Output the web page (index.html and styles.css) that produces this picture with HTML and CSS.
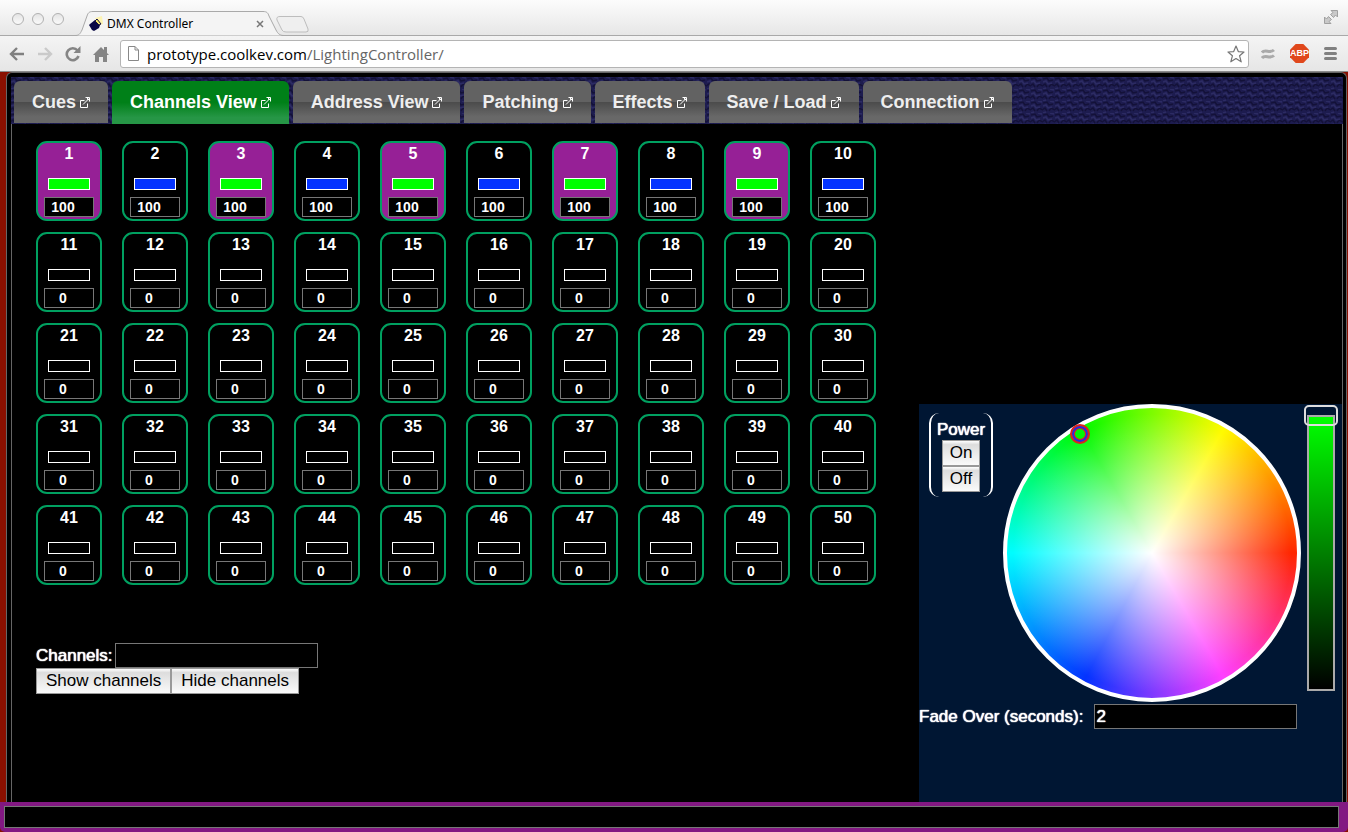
FILE: index.html
```html
<!DOCTYPE html>
<html lang="en">
<head>
<meta charset="utf-8">
<title>DMX Controller</title>
<link rel="stylesheet" href="styles.css">
</head>
<body>
<svg class="defs" width="0" height="0" aria-hidden="true">
  <symbol id="popout" viewBox="0 0 10 11"><path d="M4.500 3.500H.5v7h7v-4M3 7.500 9 1.500M5.500.5h4v4M7.500 1v1.500H9" fill="none" stroke="currentColor"/></symbol>
</svg>
<header class="browser">
  <div class="titlebar">
    <div class="lights"><span class="light"></span><span class="light"></span><span class="light"></span></div>
    <div class="browser-tab">
      <svg class="tab-shape" viewBox="0 0 212 25" aria-hidden="true"><path d="M0 24.500C4 24.500 5 23 7 19L12 5C13 2 14 .5 18 .5H188C192 .5 193 2 194 5L201 19C203 23 205 24.500 209 24.500" fill="#f4f4f4" stroke="#a9a9a9"/></svg>
      <svg class="favicon" viewBox="0 0 16 16" aria-hidden="true"><path d="M7 2 14 0 15 8 11 9Z" fill="#fdf3b0"/><path d="M2 8 7 4 9 5 12 9 11 12 6 15 4 14 1 9Z" fill="#0a0845"/><path d="M7 5 9 3 13 8 11 9Z" fill="#f5e66b" stroke="#161040"/></svg>
      <span class="browser-tab-title">DMX Controller</span>
      <button class="tab-close" type="button" aria-label="Close tab"><svg viewBox="0 0 8 8"><path d="M1 1 7 7M7 1 1 7" stroke="#777" stroke-width="1.500"/></svg></button>
    </div>
    <button class="new-tab" type="button" aria-label="New tab"><svg viewBox="0 0 34 17"><path d="M4 .5H25Q27 .5 28 3L32 13Q33 16 30 16H10Q7 16 6 14L1 4Q0 .5 4 .5Z" fill="#efefef" stroke="#bdbdbd"/></svg></button>
    <button class="fullscreen" type="button" aria-label="Full screen"><svg viewBox="0 0 14 14"><path d="M7 .5h6.500V7L11.500 5 9.500 7.500 6.500 4.500 9 2.500ZM.5 7 2.500 9 4.500 6.500 7.500 9.500 5 11.500 7 13.500H.5Z" fill="#c9c9c9" stroke="#a0a0a0"/></svg></button>
  </div>
  <div class="toolbar">
    <div class="nav">
      <button type="button" aria-label="Back"><svg viewBox="0 0 16 16"><path d="M15 8H2M8 2 2 8 8 14" fill="none" stroke="#808080" stroke-width="2.400"/></svg></button>
      <button type="button" aria-label="Forward"><svg viewBox="0 0 16 16"><path d="M1 8H14M8 2 14 8 8 14" fill="none" stroke="#cacaca" stroke-width="2.400"/></svg></button>
      <button type="button" aria-label="Reload"><svg viewBox="0 0 16 16"><path d="M12.500 4.500A6 6 0 1 0 13.500 10" fill="none" stroke="#858585" stroke-width="2.600"/><path d="M15.500 0V7H8.500Z" fill="#858585"/></svg></button>
      <button type="button" aria-label="Home"><svg viewBox="0 0 16 16"><path d="M8 1 11 4V1H14V7L16 9H14V16H10V11H6V16H2V9H0Z" fill="#858585"/></svg></button>
    </div>
    <div class="address">
      <svg class="page-icon" viewBox="0 0 11 15" aria-hidden="true"><path d="M.5.5H7L10.500 4V14.500H.5ZM7 .5V4H10.500" fill="#fff" stroke="#888"/></svg>
      <div class="url" role="textbox" aria-label="Address"><span class="url-host">prototype.coolkev.com</span>/LightingController/</div>
      <button class="star" type="button" aria-label="Bookmark"><svg viewBox="0 0 18 18"><path d="M9 1 11.300 6.600 17 7 12.600 10.800 14.200 16.800 9 13.500 3.800 16.800 5.400 10.800 1 7 6.700 6.600Z" fill="#fff" stroke="#777" stroke-width="1.200" stroke-linejoin="round"/></svg></button>
    </div>
    <div class="extensions">
      <button type="button" aria-label="Extension"><svg class="wave" viewBox="0 0 14 12"><path d="M1 4.500C4 .5 9 6 13 2M1 10C4 6 9 11.500 13 7.500" fill="none" stroke="#aaa" stroke-width="3"/></svg></button>
      <button class="abp" type="button">ABP</button>
      <button type="button" aria-label="Menu"><svg class="menu-icon" viewBox="0 0 13 13"><path d="M1.500 1.500h10M1.500 6.500h10M1.500 11.500h10" stroke="#808080" stroke-width="3" stroke-linecap="round"/></svg></button>
    </div>
  </div>
</header>
<div class="page">
  <div class="frame">
    <nav class="tabs">
      <svg class="weave" aria-hidden="true">
        <pattern id="weave" width="12" height="12" patternUnits="userSpaceOnUse">
          <path d="M0 2 4 1 6 4 10 3M-1 9 2 7 4 10M6 10 8 7 12 9" fill="none" stroke="#131138" stroke-width="1.500"/>
          <path d="M0 5 3 4 5 7 9 6M7 0 11 1M0 12 3 11" fill="none" stroke="#2c2b63" stroke-width="1.500"/>
        </pattern>
        <rect width="100%" height="100%" fill="url(#weave)"/>
      </svg>
      <a class="tab" href="#cues">Cues <svg><use href="#popout"/></svg></a>
      <a class="tab tab-active" href="#channels">Channels View <svg><use href="#popout"/></svg></a>
      <a class="tab" href="#address">Address View <svg><use href="#popout"/></svg></a>
      <a class="tab" href="#patching">Patching <svg><use href="#popout"/></svg></a>
      <a class="tab" href="#effects">Effects <svg><use href="#popout"/></svg></a>
      <a class="tab" href="#save">Save / Load <svg><use href="#popout"/></svg></a>
      <a class="tab" href="#connection">Connection <svg><use href="#popout"/></svg></a>
    </nav>
    <div class="content">
      <main class="channels-view">
        <div class="channels" id="channels"></div>
        <form class="filter">
          <div class="field"><label for="filter">Channels:</label><input class="text" id="filter" type="text"></div>
          <div class="field"><button class="btn" type="button">Show channels</button><button class="btn" type="button">Hide channels</button></div>
        </form>
      </main>
      <aside class="panel">
        <div class="picker">
          <div class="power" role="group" aria-labelledby="power-label">
            <span id="power-label">Power</span>
            <button class="btn btn-small" type="button">On</button>
            <button class="btn btn-small" type="button">Off</button>
          </div>
          <div class="wheel"><span class="marker"></span></div>
          <input class="level" type="range" min="0" max="100" value="100" aria-label="Intensity">
        </div>
        <div class="field fade"><label for="fade">Fade Over (seconds):</label><input class="text" id="fade" type="text" value="2"></div>
      </aside>
    </div>
  </div>
</div>
<footer class="command"><input type="text" aria-label="Command line"></footer>
<script src="script.js"></script>
</body>
</html>
```

FILE: styles.css
```css
* { box-sizing: border-box; }
body {
  margin: 0;
  min-height: 100vh;
  display: flex;
  flex-direction: column;
  background: #8a1000;
  color: #fff;
  font: 17px/20px "Liberation Sans", Arial, sans-serif;
}
button, input { font: inherit; margin: 0; }
.defs { position: absolute; }

/* Browser window */
.browser { color: #000; background: #ececec; }
.browser button { border: 0; padding: 0; background: none; display: block; }
.browser svg { display: block; }
.titlebar {
  display: flex;
  align-items: flex-end;
  height: 36px;
  background: linear-gradient(#fcfcfc, #e6e6e6);
  box-shadow: inset 0 -1px #a9a9a9;
}
.lights { display: flex; gap: 8px; padding: 0 0 11px 12px; width: 75px; }
.light {
  width: 12px;
  height: 12px;
  border: 1px solid #b0b0b0;
  border-radius: 50%;
  background: linear-gradient(#e4e4e4, #fafafa);
}
.browser-tab {
  position: relative;
  display: flex;
  align-items: center;
  width: 208px;
  height: 25px;
  padding: 0 19px 0 13px;
  font: 12px/16px "Noto Sans", sans-serif;
}
.tab-shape { position: absolute; left: 0; top: 0; width: 212px; height: 25px; }
.favicon, .browser-tab-title, .tab-close { position: relative; }
.favicon { width: 16px; height: 16px; margin-right: 3px; }
.browser-tab-title { flex: 1; }
.tab-close svg { width: 8px; height: 8px; }
.browser .new-tab { position: relative; margin: 0 auto 3px -7px; }
.new-tab svg { width: 34px; height: 17px; }
.browser .fullscreen { margin: 0 10px 12px 0; }
.fullscreen svg { width: 14px; height: 14px; }
.toolbar {
  display: flex;
  align-items: center;
  height: 36px;
  padding: 0 11px 0 9px;
  background: linear-gradient(#f4f4f4, #e6e6e6);
  border-bottom: 1px solid #8a8a8a;
}
.nav { display: flex; gap: 12px; width: 111px; }
.nav svg { width: 16px; height: 16px; }
.address {
  flex: 1;
  display: flex;
  align-items: center;
  height: 28px;
  padding: 0 3px 0 7px;
  border: 1px solid #b4b4b4;
  border-radius: 3px;
  background: #fff;
}
.page-icon { width: 11px; height: 15px; }
.url { flex: 1; padding-left: 8px; color: #666; font: 15px/20px "Open Sans", "Noto Sans", sans-serif; }
.url-host { color: #000; }
.star svg { width: 18px; height: 18px; }
.extensions { display: flex; align-items: center; gap: 15px; padding-left: 12px; }
.wave { width: 14px; height: 12px; }
.browser .abp {
  width: 19px;
  height: 19px;
  background: #e0481c;
  color: #fff;
  font: bold 9px/19px "Liberation Sans", Arial, sans-serif;
  clip-path: polygon(30% 0, 70% 0, 100% 30%, 100% 70%, 70% 100%, 30% 100%, 0 70%, 0 30%);
}
.menu-icon { width: 13px; height: 13px; }

/* Application frame */
.page { flex: 1; display: flex; padding: 0 1px 0 6px; }
.frame {
  flex: 1;
  display: flex;
  flex-direction: column;
  padding: 4px 3px 0 4px;
  border: 1px solid #666;
  border-bottom: 0;
  border-radius: 6px 6px 0 0;
  background: #000;
}
.tabs {
  position: relative;
  display: flex;
  gap: 4px;
  height: 47px;
  padding: 4px 3px 0;
  background: #1d1c4f;
}
.weave { position: absolute; inset: 0; width: 100%; height: 100%; }
.tab {
  position: relative;
  height: 42px;
  padding: 0 18px;
  border-radius: 6px 6px 0 0;
  background: linear-gradient(#626262 0 50%, #4b4b4b 50%, #686868 85%);
  color: #eee;
  font-size: 18px;
  font-weight: bold;
  line-height: 42px;
  text-decoration: none;
  white-space: nowrap;
}
.tab svg { width: 10px; height: 11px; margin-left: -1px; color: #fff; vertical-align: 0; }
.tab-active {
  height: 43px;
  background: linear-gradient(#008018 0 50%, #269646 85%);
  color: #fff;
}
.content {
  flex: 1;
  display: flex;
  justify-content: space-between;
  border: 1px solid #666;
  border-width: 0 1px;
}
.channels-view { padding: 17px 24px; }
.channels { display: grid; grid-template-columns: repeat(10, 66px); gap: 11px 20px; }
.channel {
  display: flex;
  flex-direction: column;
  align-items: center;
  height: 80px;
  border: 2px solid #00a060;
  border-radius: 11px;
}
.channel-selected { background: #962096; }
.channel label { height: 35px; font-size: 16px; font-weight: bold; line-height: 22px; }
.swatch { width: 42px; height: 12px; border: 1px solid #fff; }
.swatch-green { background: #0f0; }
.swatch-blue { background: #0433ff; }
.channel input {
  width: 50px;
  height: 20px;
  margin-top: 7px;
  padding: 0 12px 0 0;
  border: 1px solid #777;
  background: #000;
  color: #fff;
  font-size: 14px;
  font-weight: bold;
  text-align: center;
}
.filter { padding-top: 58px; }
.field { display: flex; align-items: center; }
.field label { padding-right: 2px; }
.field label, .power span, .text { text-shadow: 0 0 1px #fff, 0 0 1px #fff; }
.text {
  width: 203px;
  height: 25px;
  padding: 0 1px;
  border: 1px solid #777;
  background: #000;
  color: #fff;
}
.btn {
  height: 26px;
  padding: 0 9px;
  border: 1px solid #999;
  border-radius: 0;
  background: linear-gradient(#fff, #ddd 15%, #fafafa);
  color: #000;
}
.btn-small { padding: 0 7px; }

/* Colour picker */
.panel { align-self: flex-end; width: 423px; padding-bottom: 73px; background: #001633; }
.picker { display: flex; align-items: flex-start; }
.power {
  display: flex;
  flex-direction: column;
  align-items: center;
  width: 64px;
  height: 84px;
  margin: 9px 10px 0;
  padding-top: 7px;
  border: 2px solid #fff;
  border-width: 0 2px;
  border-radius: 10px;
}
.wheel {
  position: relative;
  width: 298px;
  height: 298px;
  border: 4px solid #fff;
  border-radius: 50%;
  background:
    radial-gradient(closest-side, #fff, rgba(255, 255, 255, 0) 96%),
    conic-gradient(#7dfc00, #fffb00 30deg, #ff2600 90deg, #ff40ff 150deg, #0433ff 208deg, #00fdff 270deg, #00f900 330deg, #7dfc00);
}
.marker {
  position: absolute;
  left: 63px;
  top: 16px;
  width: 20px;
  height: 20px;
  border: 2px solid #e02020;
  border-radius: 50%;
  background: #00f900;
  box-shadow: inset 0 0 0 2px #2a2ae0, inset 0 0 0 3px #e02020;
}
.level {
  appearance: none;
  writing-mode: vertical-lr;
  direction: rtl;
  width: 34px;
  height: 286px;
  margin: 1px 0 0 3px;
  background:
    linear-gradient(#0f0, #000) 5px 12px / 24px 272px no-repeat,
    linear-gradient(#aaa, #aaa) 3px 10px / 28px 276px no-repeat;
}
.level::-webkit-slider-thumb {
  appearance: none;
  width: 34px;
  height: 21px;
  border: 2px solid #ddd;
  border-radius: 5px;
  background: transparent;
}
.fade { gap: 9px; padding-top: 2px; }

.command {
  padding: 4px 9px 4px 4px;
  background: #821882;
  border-radius: 0 0 5px 5px;
}
.command input {
  display: block;
  width: 100%;
  height: 22px;
  border: 1px solid #777;
  background: #000;
  color: #fff;
}
```

FILE: script.js
```js
const grid = document.getElementById("channels");
for (let n = 1; n <= 50; n++) {
  const patched = n <= 10;
  const selected = patched && n % 2 === 1;
  const colour = selected ? "swatch-green" : patched ? "swatch-blue" : "";
  grid.insertAdjacentHTML("beforeend",
    `<div class="channel ${selected ? "channel-selected" : ""}">
      <label for="ch${n}">${n}</label>
      <span class="swatch ${colour}"></span>
      <input id="ch${n}" type="text" value="${patched ? 100 : 0}">
    </div>`);
}
```
